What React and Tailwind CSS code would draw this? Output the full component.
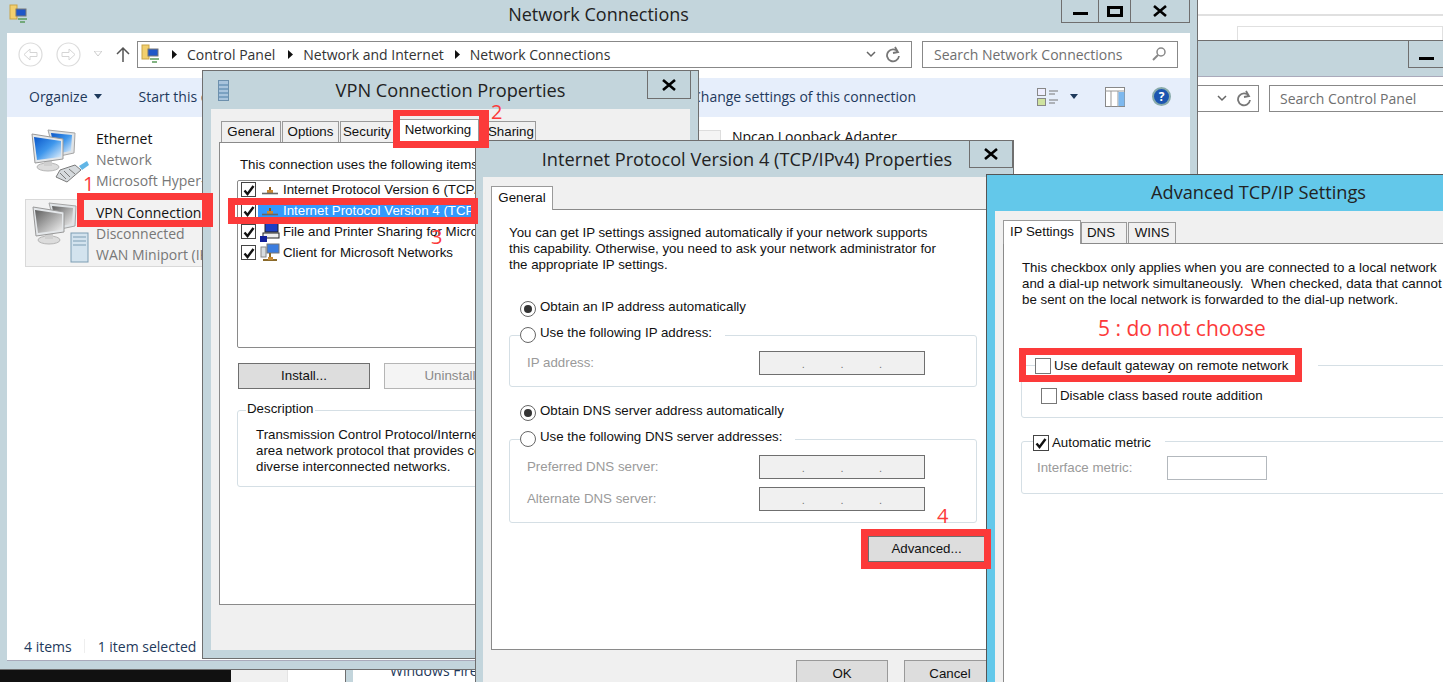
import React from "react"

const segoe = "font-['Open_Sans',sans-serif]"
const arial = "font-['Liberation_Sans',Arial,sans-serif]"

function CloseGlyph() {
  return (
    <svg width="14" height="12" viewBox="0 0 14 12">
      <path d="M1 1 L13 11 M13 1 L1 11" stroke="#000" strokeWidth="2.6" />
    </svg>
  )
}

function MonitorIcon({ gray, badge }) {
  const id = gray ? "g" : "b"
  return (
    <svg width="64" height="66" viewBox="0 0 64 66" className="shrink-0">
      <defs>
        <linearGradient id={`scr${id}`} x1="0" y1="0" x2="1" y2="1">
          <stop offset="0" stopColor={gray ? "#5f5f5f" : "#0a56c8"} />
          <stop offset="0.5" stopColor={gray ? "#a9a9a9" : "#3f97ec"} />
          <stop offset="1" stopColor={gray ? "#f2f2f2" : "#eef6fc"} />
        </linearGradient>
      </defs>
      <path d="M23 3 L50 6 L49 26 L30 30 Z" fill="#dfe3e6" stroke="#a5a5a5" />
      <path d="M26 6 L47 8 L46 24 L30 27 Z" fill={`url(#scr${id})`} />
      <ellipse cx="23" cy="40" rx="11" ry="4" fill="#dcdcdc" stroke="#b5b5b5" />
      <rect x="19" y="33" width="8" height="6" fill="#cfcfcf" />
      <path d="M7 7 L38 12 L38 32 L10 36 Z" fill="#e4e7ea" stroke="#999" />
      <path d="M9 10 L36 14 L36 30 L12 33 Z" fill={`url(#scr${id})`} />
      {badge === "plug" && (
        <g>
          <path d="M31 50 L35 43 L50 38 L56 43 L42 55 Z" fill="#d6dadd" stroke="#7b7b7b" />
          <path d="M35 46 L41 52 M39 44 L45 50 M44 42 L50 47" stroke="#7b7b7b" />
          <path d="M54 39 L62 34 L64 38 L57 43 Z" fill="#62b6e6" />
        </g>
      )}
      {badge === "tower" && (
        <g>
          <rect x="45" y="33" width="17" height="29" fill="#d3e3ee" stroke="#7d9db3" />
          <path d="M47 37 H60 M47 41 H60 M47 45 H60" stroke="#7d9db3" />
        </g>
      )}
    </svg>
  )
}

function NetItemIcon({ type }) {
  if (type === "proto") {
    return (
      <svg width="16" height="16" viewBox="0 0 16 16">
        <path d="M8 5 V9" stroke="#8a5a1a" strokeWidth="2" />
        <rect x="5" y="8" width="6" height="3" fill="#c98a35" />
        <path d="M0 11.5 H16" stroke="#666" strokeWidth="1.6" />
      </svg>
    )
  }
  if (type === "share") {
    return (
      <svg width="20" height="20" viewBox="0 0 20 20">
        <rect x="5" y="1" width="13" height="9" fill="#1d3fc4" stroke="#222" />
        <rect x="3" y="11" width="16" height="5" fill="#eee" stroke="#222" />
        <rect x="0" y="14" width="7" height="6" fill="#12209a" />
      </svg>
    )
  }
  return (
    <svg width="20" height="20" viewBox="0 0 20 20">
      <rect x="1" y="4" width="5" height="10" fill="#d8dde0" stroke="#888" />
      <rect x="7" y="1" width="12" height="9" fill="#3b7de0" stroke="#777" />
      <path d="M10 10 V15 M3 17 H17" stroke="#8a6a2a" strokeWidth="2" />
      <rect x="8" y="14" width="5" height="3" fill="#c98a35" />
    </svg>
  )
}

function FolderNet() {
  return (
    <svg width="20" height="20" viewBox="0 0 20 20" className="shrink-0">
      <rect x="1" y="1" width="7" height="14" fill="#f2cf6d" stroke="#c9a548" />
      <rect x="7" y="5" width="10" height="7" fill="#1f57c8" stroke="#777" />
      <path d="M9 15 H18 M11 18 H16" stroke="#5a9a5a" strokeWidth="1.5" />
    </svg>
  )
}

function NavArrow({ flip, className = "" }) {
  return (
    <svg width="25" height="25" viewBox="0 0 25 25" className={className}>
      <circle cx="12.5" cy="12.5" r="11.5" fill="#fff" stroke="#dcdcdc" strokeWidth="1.2" />
      <path
        d={flip ? "M6 10.5 H13 V7 L19 12.5 L13 18 V14.5 H6 Z" : "M19 10.5 H12 V7 L6 12.5 L12 18 V14.5 H19 Z"}
        fill="none"
        stroke="#d5d5d5"
      />
    </svg>
  )
}

function Check({ checked = true, className = "h-4 w-4" }) {
  return (
    <span className={`flex shrink-0 items-center justify-center border border-[#444] bg-white ${className}`}>
      {checked && (
        <svg width="12" height="12" viewBox="0 0 12 12">
          <path d="M1.5 6.5 L4.5 10 L10.5 2" fill="none" stroke="#111" strokeWidth="2.4" />
        </svg>
      )}
    </span>
  )
}

function Radio({ on }) {
  return (
    <span className="relative z-10 flex h-4 w-4 shrink-0 translate-y-[2px] items-center justify-center rounded-full border border-[#666] bg-white">
      {on && <span className="h-2 w-2 rounded-full bg-[#333]" />}
    </span>
  )
}

function IpField({ className = "" }) {
  return (
    <div className={`flex h-6 w-[166px] items-end justify-around border border-[#6f6f6f] bg-[#f0f0f0] px-6 pb-1 text-[11px] leading-none text-[#777] ${className}`}>
      <span>.</span>
      <span>.</span>
      <span>.</span>
    </div>
  )
}

function Tab({ label, width, active, className = "" }) {
  return (
    <div
      style={{ width }}
      className={`flex shrink-0 items-center justify-center border border-b-0 border-[#9a9a9a] ${
        active ? "relative z-10 -mb-px h-[24px] bg-white pb-[2px]" : "h-[21px] bg-[#f0f0f0] pb-px"
      } ${className}`}
    >
      {label}
    </div>
  )
}

function Annotation({ className, children }) {
  return <div className={`absolute z-50 ${className}`}>{children}</div>
}

function Explorer() {
  return (
    <div className={`absolute left-0 top-0 flex h-[670px] w-[1198px] flex-col border-r border-b border-[#6f6f6f] bg-[#c3d5dc] text-[14px] ${segoe}`}>
      <div className="relative flex h-[33px] shrink-0 items-center justify-center pb-1 text-[18px] text-[#222]">
        <span className="absolute left-[9px] top-[4px]"><FolderNet /></span>
        Network Connections
        <div className="absolute right-[7px] top-0 flex h-[23px] border border-t-0 border-[#6f6f6f]">
          <div className="flex w-[36px] items-end justify-center pb-[7px]"><span className="h-[3px] w-[15px] bg-black" /></div>
          <div className="flex w-[33px] items-center justify-center border-x border-[#6f6f6f]"><span className="h-[11px] w-[16px] border-[3px] border-black" /></div>
          <div className="flex w-[58px] items-center justify-center"><CloseGlyph /></div>
        </div>
      </div>

      <div className="mx-[7px] mb-[8px] flex min-h-0 flex-1 flex-col border-b border-[#aab] bg-white">
        <div className="flex h-[45px] shrink-0 items-center pb-[3px] text-[#333]">
          <NavArrow className="ml-[11px]" />
          <NavArrow flip className="ml-[13px]" />
          <svg className="ml-[13px]" width="8" height="6" viewBox="0 0 8 6"><path d="M0 0 H8 L4 5 Z" fill="none" stroke="#ccc" /></svg>
          <svg className="ml-[14px]" width="14" height="16" viewBox="0 0 14 16"><path d="M7 16 V2 M1 8 L7 2 L13 8" fill="none" stroke="#555" strokeWidth="1.5" /></svg>
          <div className="ml-[7px] flex h-[27px] w-[775px] items-center border border-[#888] pl-[3px]">
            <FolderNet />
            <svg className="ml-[11px]" width="5" height="9" viewBox="0 0 5 9"><path d="M0 0 L5 4.5 L0 9 Z" fill="#111" /></svg>
            <span className="ml-[10px]">Control Panel</span>
            <svg className="ml-[13px]" width="5" height="9" viewBox="0 0 5 9"><path d="M0 0 L5 4.5 L0 9 Z" fill="#111" /></svg>
            <span className="ml-[10px]">Network and Internet</span>
            <svg className="ml-[11px]" width="5" height="9" viewBox="0 0 5 9"><path d="M0 0 L5 4.5 L0 9 Z" fill="#111" /></svg>
            <span className="ml-[10px]">Network Connections</span>
            <svg className="ml-auto" width="10" height="7" viewBox="0 0 10 7"><path d="M1 1 L5 5 L9 1" fill="none" stroke="#666" strokeWidth="1.5" /></svg>
            <svg className="ml-[9px] mr-[10px]" width="16" height="17" viewBox="0 0 16 17"><path d="M13 6 A6 6 0 1 0 14 10 M10 1 L13 6 L8 7" fill="none" stroke="#777" strokeWidth="1.8" /></svg>
          </div>
          <div className="ml-[10px] flex h-[27px] w-[256px] items-center justify-between border border-[#888] pl-[11px] pr-[11px] text-[#6f6f6f]">
            Search Network Connections
            <svg width="14" height="14" viewBox="0 0 14 14"><circle cx="9" cy="5" r="4" fill="none" stroke="#888" strokeWidth="1.5" /><path d="M6 8 L1 13" stroke="#888" strokeWidth="2" /></svg>
          </div>
        </div>

        <div className="flex h-[39px] shrink-0 items-center bg-[#e6eefb] pb-[2px] pr-[19px] text-[#1e395b]">
          <span className="ml-[22px]">Organize</span>
          <svg className="ml-[6px]" width="8" height="5" viewBox="0 0 8 5"><path d="M0 0 H8 L4 5 Z" fill="#1e395b" /></svg>
          <span className="ml-[37px]">Start this connection</span>
          <span className="ml-auto">Change settings of this connection</span>
          <svg className="ml-[121px]" width="22" height="18" viewBox="0 0 22 18">
            <rect x="0.5" y="0.5" width="8" height="7" fill="#eef" stroke="#888" />
            <rect x="0.5" y="10.5" width="8" height="7" fill="#cfe3a0" stroke="#888" />
            <path d="M12 3 H21 M12 6 H18 M12 12 H21 M12 15 H18" stroke="#777" />
          </svg>
          <svg className="ml-[11px]" width="8" height="5" viewBox="0 0 8 5"><path d="M0 0 H8 L4 5 Z" fill="#1e395b" /></svg>
          <svg className="ml-[27px]" width="20" height="20" viewBox="0 0 20 20">
            <rect x="0.5" y="0.5" width="19" height="19" fill="#fff" stroke="#888" />
            <path d="M0 4 H20 M6 4 V20 M13 4 V20" stroke="#999" />
            <rect x="13.5" y="5" width="6" height="14" fill="#7db8ee" />
          </svg>
          <span className="ml-[27px] flex h-[19px] w-[19px] items-center justify-center rounded-full border-2 border-[#8aa] bg-[#1c55b0] text-[12px] font-bold text-white">?</span>
        </div>

        <div className="flex min-h-0 flex-1 flex-col">
          <div className="flex flex-1 pl-[18px] pt-[10px]">
            <div className="w-[672px]">
              <div className="flex h-[68px] items-start">
                <MonitorIcon badge="plug" />
                <div className="ml-[7px] mt-px leading-[21px]">
                  <div className="text-[#111]">Ethernet</div>
                  <div className="text-[#777]">Network</div>
                  <div className="text-[#777]">Microsoft Hyper-V</div>
                </div>
              </div>
              <div className="mt-[4px] flex h-[68px] w-[300px] items-start border border-[#d9d9d9] bg-[#f2f2f2]">
                <MonitorIcon gray badge="tower" />
                <div className="ml-[6px] mt-[2px] leading-[21px]">
                  <div className="text-[#111]">VPN Connection</div>
                  <div className="text-[#777]">Disconnected</div>
                  <div className="text-[#777]">WAN Miniport (IKEv2)</div>
                </div>
              </div>
            </div>
            <div className="flex items-start">
              <span className="mt-[3px] h-5 w-6 border border-[#ddd] bg-[#f4f4f4]" />
              <div className="-mt-px ml-[11px] leading-[21px] text-[#111]">Npcap Loopback Adapter</div>
            </div>
          </div>
          <div className="flex h-[28px] shrink-0 items-center pl-[17px] text-[#1e395b]">
            <span>4 items</span>
            <span className="ml-[12px] h-[14px] w-px bg-[#eee]" />
            <span className="ml-[13px]">1 item selected</span>
          </div>
        </div>
      </div>
    </div>
  )
}

function BackWindow() {
  return (
    <>
      <div className="absolute left-[1197px] top-[14px] h-[2px] w-[246px] bg-[#e0e0e0]" />
      <div className="absolute left-[1237px] top-[26px] h-[20px] w-[206px] border border-[#e0e0e0]" />
      <div className={`absolute left-[1197px] top-[40px] flex h-[250px] w-[246px] flex-col border-t border-[#6f6f6f] bg-white text-[14px] ${segoe}`}>
        <div className="relative h-[36px] shrink-0 border-b border-[#aab] bg-[#c3d5dc]">
          <div className="absolute right-0 top-0 flex h-[27px] w-[35px] items-end justify-center border-b border-l border-[#6f6f6f] pb-[7px]">
            <span className="h-[3px] w-[15px] bg-black" />
          </div>
        </div>
        <div className="mt-[8px] flex items-center">
          <div className="flex h-[27px] w-[62px] items-center justify-end border border-l-0 border-[#888] pr-[6px]">
            <svg className="mr-[9px]" width="10" height="7" viewBox="0 0 10 7"><path d="M1 1 L5 5 L9 1" fill="none" stroke="#666" strokeWidth="1.5" /></svg>
            <svg width="16" height="17" viewBox="0 0 16 17"><path d="M13 6 A6 6 0 1 0 14 10 M10 1 L13 6 L8 7" fill="none" stroke="#777" strokeWidth="1.8" /></svg>
          </div>
          <div className="ml-[10px] flex h-[27px] flex-1 items-center border border-r-0 border-[#888] pl-[10px] text-[#6f6f6f]">Search Control Panel</div>
        </div>
      </div>
      <div className="absolute left-0 top-[670px] h-[12px] w-[231px] bg-[#111]" />
      <div className="absolute left-[231px] top-[670px] h-[12px] w-[57px] border-r border-[#e4e4e4] bg-[#f0f0f0]" />
      <div className={`absolute left-[345px] top-[660px] h-[22px] w-[130px] overflow-hidden border-l border-[#6f6f6f] bg-white pl-[8px] ${segoe}`}>
        <div className="h-full whitespace-nowrap pl-[36px] pt-[2px] text-[14px] leading-[18px] text-[#1e395b]">Windows Firewall</div>
      </div>
      <div className="absolute left-[345px] top-[670px] h-[12px] w-[8px] border-l border-[#6f6f6f] bg-[#c3d5dc]" />
    </>
  )
}

function VpnDialog() {
  return (
    <div className={`absolute left-[202px] top-[70px] flex h-[589px] w-[497px] flex-col border border-[#6f6f6f] bg-[#c3d5dc] text-[13.3px] ${arial} text-[#111]`}>
      <div className={`relative flex h-[38px] shrink-0 items-center justify-center pt-px text-[18.2px] ${segoe} text-[#222]`}>
        <svg className="absolute left-[15px] top-[9px]" width="11" height="21" viewBox="0 0 11 21">
          <rect x="0.5" y="0.5" width="10" height="20" fill="#a9c4dd" stroke="#6d90ad" />
          <path d="M1 5 H10 M1 9 H10 M1 13 H10 M1 17 H10" stroke="#4d7ea6" />
        </svg>
        VPN Connection Properties
        <div className="absolute right-[7px] top-0 flex h-[28px] w-[44px] items-center justify-center border border-t-0 border-[#6f6f6f]"><CloseGlyph /></div>
      </div>
      <div className="mx-[8px] mb-[8px] flex min-h-0 flex-1 flex-col bg-[#f0f0f0] px-[8px] pt-[10px]">
        <div className="ml-[2px] flex items-end gap-px">
          <Tab label="General" width={60} />
          <Tab label="Options" width={57} />
          <Tab label="Security" width={54} />
          <Tab label={<span className="-translate-y-[1px]">Networking</span>} width={82} active className="ml-[2px]" />
          <Tab label="Sharing" width={50} className="ml-[6px] justify-start pl-px" />
        </div>
        <div className="mb-[45px] flex min-h-0 flex-1 flex-col border border-[#8a8a8a] bg-white pl-[20px] pt-[14px]">
          <div className="whitespace-nowrap leading-[16px]">This connection uses the following items:</div>
          <div className="-ml-[3px] mt-[7px] h-[168px] w-[400px] shrink-0 rounded-[2px] border border-[#8a8a8a] pl-[3px] leading-[21px]">
            <div className="-mt-[2px]">
              {[
                ["Internet Protocol Version 6 (TCP/IPv6)", "proto"],
                ["Internet Protocol Version 4 (TCP/IPv4)", "proto", true],
                ["File and Printer Sharing for Microsoft Networks", "share"],
                ["Client for Microsoft Networks", "client"],
              ].map(([text, type, selected]) => (
                <div key={text} className="flex h-[21px] items-center whitespace-nowrap">
                  <Check className="h-[15px] w-[15px]" />
                  <div className={`ml-[2px] flex h-[21px] flex-1 items-center pl-[2px] ${selected ? "bg-[#3399ff] text-white" : ""}`}>
                    <span className="flex w-[20px] justify-center"><NetItemIcon type={type} /></span>
                    <span className="ml-[3px]">{text}</span>
                  </div>
                </div>
              ))}
            </div>
          </div>
          <div className="-ml-[2px] mt-[15px] flex">
            <div className="flex h-[26px] w-[132px] items-center justify-center border border-[#6f6f6f] bg-[#dddddd] pb-px">Install...</div>
            <div className="ml-[14px] flex h-[26px] w-[132px] items-center justify-center border border-[#b5b5b5] bg-[#f4f4f4] pb-px text-[#8a8a8a]">Uninstall</div>
          </div>
          <div className="-ml-[3px] mt-[21px] h-[77px] w-[400px] rounded-[3px] border border-[#d5dfe5] pl-[18px]">
            <div className="-ml-[10px] -mt-[10px] w-fit bg-white px-px leading-[16px]">Description</div>
            <div className="mt-[10px] w-[330px] whitespace-nowrap leading-[16px]">
              Transmission Control Protocol/Internet Protocol. The default wide
              <br />
              area network protocol that provides communication across
              <br />
              diverse interconnected networks.
            </div>
          </div>
        </div>
      </div>
    </div>
  )
}

function Ipv4Dialog() {
  return (
    <div className={`absolute left-[475px] top-[140px] flex h-[560px] w-[539px] flex-col border border-[#6f6f6f] bg-[#c3d5dc] text-[13.3px] ${arial} text-[#111]`}>
      <div className={`relative flex h-[36px] shrink-0 items-center justify-center pl-[5px] pt-[2px] text-[18.2px] ${segoe} text-[#222]`}>
        Internet Protocol Version 4 (TCP/IPv4) Properties
        <div className="absolute right-0 top-0 flex h-[27px] w-[44px] items-center justify-center border border-t-0 border-[#6f6f6f]"><CloseGlyph /></div>
      </div>
      <div className="ml-[7px] flex min-h-0 flex-1 flex-col bg-[#f0f0f0] pl-[8px] pt-[9px]">
        <Tab label="General" width={62} active />
        <div className="flex h-[441px] shrink-0 flex-col border border-[#8a8a8a] bg-white pl-[17px] pt-[15px]">
          <div className="whitespace-nowrap leading-[16px]">
            You can get IP settings assigned automatically if your network supports
            <br />
            this capability. Otherwise, you need to ask your network administrator for
            <br />
            the appropriate IP settings.
          </div>
          <label className="ml-[11px] mt-[26px] flex h-4 items-center gap-[4px]"><Radio on />Obtain an IP address automatically</label>
          <div className="mt-[20px] h-[52px] w-[468px] shrink-0 rounded-[3px] border border-[#d5dfe5] pl-[17px]">
            <label className="-ml-[7px] -mt-[11px] flex h-4 w-fit items-center gap-[4px] bg-white pr-[13px]"><Radio />Use the following IP address:</label>
            <div className="mt-[10px] flex items-center justify-between pr-[51px] text-[#9a9a9a]">IP address:<IpField /></div>
          </div>
          <label className="ml-[11px] mt-[16px] flex h-4 items-center gap-[4px]"><Radio on />Obtain DNS server address automatically</label>
          <div className="mt-[20px] h-[84px] w-[468px] shrink-0 rounded-[3px] border border-[#d5dfe5] pl-[17px]">
            <label className="-ml-[7px] -mt-[11px] flex h-4 w-fit items-center gap-[4px] bg-white pr-[13px]"><Radio />Use the following DNS server addresses:</label>
            <div className="mt-[10px] flex items-center justify-between pr-[51px] text-[#9a9a9a]">Preferred DNS server:<IpField /></div>
            <div className="mt-[8px] flex items-center justify-between pr-[51px] text-[#9a9a9a]">Alternate DNS server:<IpField /></div>
          </div>
          <div className="ml-[359px] mt-[13px] flex h-[26px] w-[117px] shrink-0 items-center justify-center border border-[#6f6f6f] bg-[#dddddd]">Advanced...</div>
        </div>
        <div className="ml-[305px] mt-[10px] flex gap-[16px]">
          <div className="flex h-[26px] w-[92px] items-center justify-center border border-[#999] bg-[#dddddd] pt-[2px]">OK</div>
          <div className="flex h-[26px] w-[92px] items-center justify-center border border-[#999] bg-[#dddddd] pt-[2px]">Cancel</div>
        </div>
      </div>
    </div>
  )
}

function AdvancedDialog() {
  return (
    <div className={`absolute left-[986px] top-[174px] flex h-[520px] w-[470px] flex-col border border-[#555] bg-[#63c8ea] text-[13.3px] ${arial} text-[#111]`}>
      <div className={`flex h-[36px] shrink-0 items-center pl-[164px] text-[18.2px] ${segoe} text-[#222]`}>
        Advanced TCP/IP Settings
      </div>
      <div className="ml-[8px] flex min-h-0 flex-1 flex-col bg-[#f0f0f0] pl-[8px] pt-[9px]">
        <div className="flex items-end">
          <Tab label="IP Settings" width={78} active />
          <Tab label="DNS" width={46} className="justify-start pl-[5px]" />
          <Tab label="WINS" width={48} className="ml-px" />
        </div>
        <div className="flex min-h-0 flex-1 flex-col border border-[#8a8a8a] bg-white pl-[18px] pt-[16px]">
          <div className="whitespace-nowrap leading-[16px]">
            This checkbox only applies when you are connected to a local network
            <br />
            and a dial-up network simultaneously.&nbsp; When checked, data that cannot
            <br />
            be sent on the local network is forwarded to the dial-up network.
          </div>
          <div className="-ml-px mt-[57px] h-[53px] w-[440px] shrink-0 rounded-[3px] border border-[#d5dfe5]">
            <div className="-mt-[10px] ml-[13px] flex items-center">
              <label className="flex items-center gap-[3px] bg-white pr-[30px]"><Check checked={false} className="h-4 w-4 border-[#777]" />Use default gateway on remote network</label>
            </div>
            <label className="ml-[19px] mt-[10px] flex items-center gap-[3px]"><Check checked={false} className="h-4 w-4 border-[#777]" />Disable class based route addition</label>
          </div>
          <div className="-ml-px mt-[23px] h-[53px] w-[440px] shrink-0 rounded-[3px] border border-[#d5dfe5]">
            <label className="-mt-[9px] ml-[11px] flex w-fit items-center gap-[3px] bg-white pr-[14px]"><Check />Automatic metric</label>
            <div className="ml-[15px] mt-[3px] flex items-center text-[#9a9a9a]">
              <span className="w-[130px]">Interface metric:</span>
              <div className="h-6 w-[100px] border border-[#b3b8bd]" />
            </div>
          </div>
        </div>
      </div>
    </div>
  )
}

export default function App() {
  return (
    <div className="relative h-[682px] w-[1443px] overflow-hidden bg-white">
      <BackWindow />
      <Explorer />
      <VpnDialog />
      <Ipv4Dialog />
      <AdvancedDialog />

      <Annotation className="left-[77px] top-[193px] h-[34px] w-[136px] border-[7px] border-r-[11px] border-[#fc3a3a]" />
      <Annotation className="left-[393px] top-[110px] h-[38px] w-[96px] border-[7px] border-r-[10px] border-t-[6px] border-[#fc3a3a]" />
      <Annotation className="left-[228px] top-[198px] h-[26px] w-[250px] border-[7px] border-[#fc3a3a]" />
      <Annotation className="left-[861px] top-[529px] h-[40px] w-[130px] border-[7px] border-[#fc3a3a]" />
      <Annotation className="left-[1019px] top-[348px] h-[34px] w-[283px] border-[7px] border-[#fc3a3a]" />

      <Annotation className={`left-[83px] top-[170px] text-[20px] leading-[27px] text-[#fc3a3a] ${segoe}`}>1</Annotation>
      <Annotation className={`left-[491px] top-[98px] text-[20px] leading-[27px] text-[#fc3a3a] ${segoe}`}>2</Annotation>
      <Annotation className={`left-[431px] top-[223px] text-[20px] leading-[27px] text-[#fc3a3a] ${segoe}`}>3</Annotation>
      <Annotation className={`left-[937px] top-[502px] text-[20px] leading-[27px] text-[#fc3a3a] ${segoe}`}>4</Annotation>
      <Annotation className={`left-[1098px] top-[315px] whitespace-nowrap text-[21px] leading-[27px] text-[#fc3a3a] ${segoe}`}>5 : do not choose</Annotation>
    </div>
  )
}
